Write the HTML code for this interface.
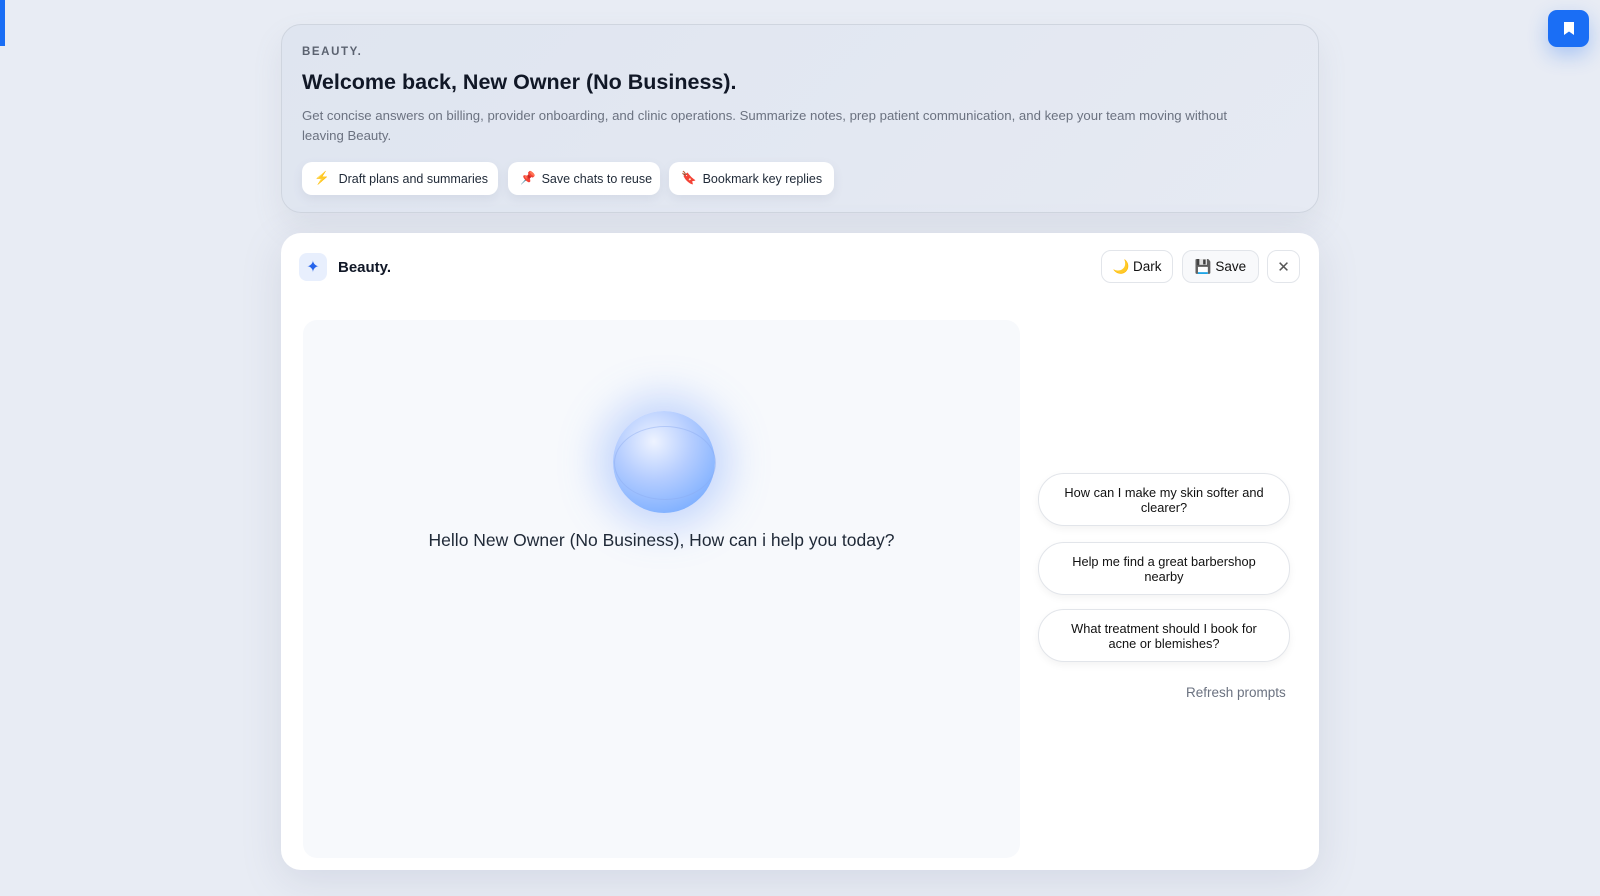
<!DOCTYPE html>
<html><head><meta charset="utf-8"><style>
*{box-sizing:border-box;margin:0;padding:0}
body{width:1600px;height:896px;background:#e8ecf4;font-family:"Liberation Sans",sans-serif;position:relative;overflow:hidden;color:#111827}
.bar{position:absolute;left:0;top:0;width:5px;height:46px;background:#1a6ef5}
.fab{position:absolute;left:1548px;top:10px;width:41px;height:37px;background:#1a6ef5;border-radius:9px;box-shadow:0 8px 20px rgba(26,110,245,.3);display:flex;align-items:center;justify-content:center}
.top{position:absolute;left:281px;top:24px;width:1038px;height:189px;border:1px solid #cfd5df;border-radius:20px;background:linear-gradient(135deg,#dfe5f0,#e6eaf3);padding:0 19px;box-shadow:0 14px 30px rgba(120,130,160,.12)}
.lbl{position:absolute;top:21px;left:20px;font-size:11.5px;font-weight:bold;letter-spacing:1.6px;color:#5b6270}
h1{position:absolute;top:45px;left:20px;font-size:21.5px;font-weight:bold;color:#111827}
.p{position:absolute;top:81px;left:20px;width:950px;font-size:13.2px;line-height:20px;color:#6b7280}
.chip{position:absolute;top:137px;height:33px;background:#fff;border-radius:10px;font-size:12.5px;color:#1f2937;display:flex;align-items:center;padding-left:12px;box-shadow:0 4px 10px rgba(100,110,140,.1)}
.main{position:absolute;left:281px;top:233px;width:1038px;height:637px;background:#fff;border-radius:20px;box-shadow:0 10px 40px rgba(120,130,160,.18)}
.ic{position:absolute;left:18px;top:20px;width:28px;height:28px;border-radius:8px;background:#e8effd;color:#2563eb;font-size:16px;display:flex;align-items:center;justify-content:center}
.bt{position:absolute;left:57px;top:26px;font-size:15px;font-weight:bold}
.btn{position:absolute;top:17px;height:33px;border:1px solid #e2e5ea;border-radius:10px;background:#fff;font-size:13.5px;display:flex;align-items:center;justify-content:center;gap:7px;color:#111}
.area{position:absolute;left:22px;top:87px;width:717px;height:538px;background:#f7f9fc;border-radius:14px}
.orb{position:absolute;left:310px;top:91px;width:102px;height:102px;border-radius:50%;background:radial-gradient(circle at 40% 30%,#eef3ff 0%,#b5cdff 40%,#7fb0ff 80%);box-shadow:0 0 40px 14px rgba(100,150,255,.35)}
.orb:after{content:"";position:absolute;left:1px;top:15px;width:100px;height:72px;border-radius:50%;border:1px solid rgba(140,170,240,.45)}
.hello{position:absolute;top:210px;width:100%;text-align:center;font-size:17.5px;color:#1f2937}
.sug{position:absolute;left:757px;width:252px;height:53px;border:1px solid #e2e5ea;border-radius:26px;background:#fff;font-size:12.8px;line-height:15px;text-align:center;display:flex;align-items:center;justify-content:center;padding:0 20px;box-shadow:0 3px 8px rgba(0,0,0,.05);color:#111}
.ref{position:absolute;left:905px;top:452px;font-size:13.5px;color:#6b7280}
</style></head><body>
<div class="bar"></div>
<div class="fab"><svg width="12" height="15" viewBox="0 0 12 15"><path d="M1 1h10v13l-5-3.5L1 14z" fill="#fff"/></svg></div>
<div class="top">
<div class="lbl">BEAUTY.</div>
<h1>Welcome back, New Owner (No Business).</h1>
<div class="p">Get concise answers on billing, provider onboarding, and clinic operations. Summarize notes, prep patient communication, and keep your team moving without leaving Beauty.</div>
<div class="chip" style="left:20px;width:196px"><span style="color:#f97316;margin-right:9px">⚡</span>Draft plans and summaries</div>
<div class="chip" style="left:226px;width:152px"><span style="color:#e11d48;margin-right:6px">📌</span>Save chats to reuse</div>
<div class="chip" style="left:387px;width:165px"><span style="color:#e11d48;margin-right:6px">🔖</span>Bookmark key replies</div>
</div>
<div class="main">
<div class="ic">✦</div><div class="bt">Beauty.</div>
<div class="btn" style="left:820px;width:72px">🌙 Dark</div>
<div class="btn" style="left:901px;width:77px;background:#f8f9fb">💾 Save</div>
<div class="btn" style="left:986px;width:33px;font-size:15px;color:#555">✕</div>
<div class="area"><div class="orb"></div><div class="hello">Hello New Owner (No Business), How can i help you today?</div></div>
<div class="sug" style="top:240px">How can I make my skin softer and clearer?</div>
<div class="sug" style="top:309px">Help me find a great barbershop nearby</div>
<div class="sug" style="top:376px">What treatment should I book for acne or blemishes?</div>
<div class="ref">Refresh prompts</div>
</div>
</body></html>
